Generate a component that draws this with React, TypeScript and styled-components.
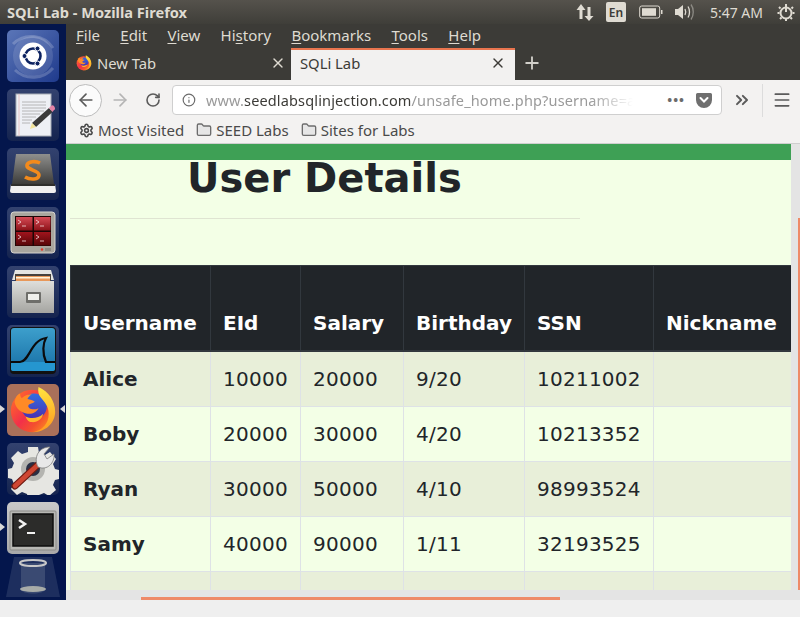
import styled, { createGlobalStyle } from "styled-components";
import type { ReactNode } from "react";
import { ArrowLeft, ArrowRight, ChevronsRight, Folder, Info, Menu, Plus, RotateCw, Settings, X } from "lucide-react";

const GlobalStyle = createGlobalStyle`
  html, body { margin: 0; padding: 0; background: #efefef; }
  * { box-sizing: border-box; }
`;

const UI_FONT = `"Noto Sans", "Open Sans", sans-serif`;
const PAGE_FONT = `"DejaVu Sans", sans-serif`;

const Desktop = styled.div`
  width: 800px;
  height: 617px;
  overflow: hidden;
  display: flex;
  flex-direction: column;
  background: #efefef;
  font-family: ${UI_FONT};
`;
const TitleBar = styled.div`
  height: 24px;
  flex: none;
  display: flex;
  align-items: center;
  padding: 0 5px 0 7px;
  background: linear-gradient(#55524c, #3f3e39);
  color: #dfdbd2;
  font-size: 14.6px;
  font-weight: 700;
`;
const TitleText = styled.span`
  flex: 1;
`;
const Indicators = styled.div`
  display: flex;
  align-items: center;
  color: #dfdbd2;
  font-weight: 400;
`;
const LangBadge = styled.span`
  width: 20px;
  height: 20px;
  margin: 0 13px 0 12px;
  background: #dfdbd2;
  color: #3c3b37;
  border-radius: 2px;
  font-size: 12px;
  font-weight: 600;
  display: flex;
  align-items: center;
  justify-content: center;
`;
const IndicatorGap = styled.span`
  width: 12px;
`;
const Clock = styled.span`
  font-size: 14px;
  margin: 0 14px 0 15px;
`;
const Workspace = styled.div`
  height: 576px;
  flex: none;
  display: flex;
`;
const Launcher = styled.div`
  width: 66px;
  flex: none;
  display: flex;
  flex-direction: column;
  align-items: center;
  padding-top: 6px;
  gap: 7px;
  background: #04164c;
`;
const Tile = styled.div<{ $bg: string }>`
  position: relative;
  width: 52px;
  height: 52px;
  flex: none;
  border-radius: 5px;
  background: ${(p) => p.$bg};
  display: flex;
  align-items: center;
  justify-content: center;
`;
const Pip = styled.i<{ $right?: boolean }>`
  position: absolute;
  top: 21px;
  ${(p) => (p.$right ? "right: -6px;" : "left: -7px;")}
  width: 0;
  height: 0;
  border-top: 4px solid transparent;
  border-bottom: 4px solid transparent;
  ${(p) => (p.$right ? "border-right: 5px solid #d8d8d8;" : "border-left: 5px solid #d8d8d8;")}
`;
const TrashTile = styled.div`
  width: 56px;
  height: 40px;
  margin-top: -4px;
  flex: none;
  display: flex;
  justify-content: center;
`;
const Browser = styled.div`
  flex: 1;
  min-width: 0;
  display: flex;
  flex-direction: column;
`;
const MenuBar = styled.div`
  height: 24px;
  flex: none;
  display: flex;
  gap: 20.300px;
  align-items: center;
  padding: 0 0 3px 10px;
  background: #3c3b37;
  color: #dfdbd2;
  font-size: 15px;
`;
const MenuItem = styled.span`
  u {
    text-underline-offset: 2px;
  }
`;
const TabStrip = styled.div`
  height: 32px;
  flex: none;
  display: flex;
  align-items: stretch;
  background: #3c3b37;
`;
const Tab = styled.div<{ $active?: boolean }>`
  width: ${(p) => (p.$active ? "224px" : "225px")};
  display: flex;
  align-items: center;
  gap: 5px;
  padding: ${(p) => (p.$active ? "0 9px 5px 9px" : "0 5px 5px 10px")};
  font-size: 14.8px;
  color: ${(p) => (p.$active ? "#3c3b37" : "#dfdbd2")};
  background: ${(p) => (p.$active ? "#f2f1f0" : "transparent")};
  border-top: 2px solid ${(p) => (p.$active ? "#e9754f" : "transparent")};
  span {
    flex: 1;
  }
`;
const NewTab = styled.div`
  width: 34px;
  padding-bottom: 2px;
  display: flex;
  align-items: center;
  justify-content: center;
  color: #d2d0ca;
`;
const NavBar = styled.div`
  height: 40px;
  flex: none;
  display: flex;
  align-items: center;
  padding-left: 3px;
  background: #f3f2f1;
  color: #5b5b5b;
`;
const BackButton = styled.div`
  width: 33px;
  height: 33px;
  flex: none;
  border: 1px solid #bcbcbc;
  border-radius: 50%;
  background: #fbfbfb;
  display: flex;
  align-items: center;
  justify-content: center;
`;
const NavIcon = styled.div<{ $width: number; $faded?: boolean }>`
  width: ${(p) => p.$width}px;
  flex: none;
  display: flex;
  align-items: center;
  justify-content: center;
  color: ${(p) => (p.$faded ? "#b5b5b5" : "#5b5b5b")};
`;
const UrlBar = styled.div`
  width: 550px;
  height: 30px;
  flex: none;
  margin-left: 4px;
  display: flex;
  align-items: center;
  padding: 0 9px;
  background: #fff;
  border: 1px solid #cfcfcf;
  border-radius: 4px;
`;
const UrlText = styled.div`
  width: 430px;
  margin-left: 10px;
  overflow: hidden;
  white-space: nowrap;
  font-size: 14.5px;
  letter-spacing: 0.15px;
  color: #9a9a9a;
  mask-image: linear-gradient(to right, #000 90%, transparent 100%);
  b {
    font-weight: 400;
    color: #3c3b37;
  }
`;
const UrlDots = styled.span`
  margin-left: 34px;
  font-size: 13px;
  font-weight: 700;
  letter-spacing: 1px;
  color: #6b6b6b;
`;
const PocketWrap = styled.span`
  margin-left: 11px;
  display: flex;
`;
const NavDivider = styled.div`
  width: 1px;
  height: 33px;
  flex: none;
  background: #dcdcdc;
`;
const BookmarkBar = styled.div`
  height: 24px;
  flex: none;
  display: flex;
  align-items: center;
  gap: 12px;
  padding: 0 0 3px 13px;
  background: #f3f2f1;
  border-bottom: 1px solid #cfcfcf;
  color: #4a4a4a;
  font-size: 15px;
`;
const Bookmark = styled.span`
  display: flex;
  align-items: center;
  gap: 4px;
`;
const ContentRow = styled.div`
  flex: 1;
  min-height: 0;
  display: flex;
`;
const Viewport = styled.div`
  width: 725px;
  flex: none;
  overflow: hidden;
  background: #f3ffe6;
  font-family: ${PAGE_FONT};
  color: #212529;
`;
const GreenBar = styled.div`
  height: 16px;
  background: #3ea055;
`;
const Heading = styled.h1`
  margin: 0 0 0 121px;
  height: 58px;
  font-size: 40px;
  line-height: 36px;
  font-weight: 700;
`;
const Rule = styled.hr`
  width: 510px;
  margin: 0 0 46px 4px;
  border: 0;
  border-top: 1px solid #dfe4d2;
`;
const DetailTable = styled.table`
  width: 721px;
  margin-left: 4px;
  table-layout: fixed;
  border-collapse: collapse;
  font-size: 20px;
  line-height: 30px;
  th,
  td {
    padding: 12px 12px;
    text-align: left;
    border: 1px solid #dee2e6;
  }
  thead th {
    height: 85px;
    vertical-align: bottom;
    padding-bottom: 12px;
    background: #212529;
    color: #fff;
    border-color: #32383e;
    border-bottom-width: 2px;
  }
  tbody tr:nth-child(odd) {
    background: #e8efd9;
  }
  tbody tr {
    height: 55px;
  }
  tbody th {
    font-weight: 700;
  }
  tbody td {
    font-weight: 400;
    letter-spacing: 0.25px;
  }
`;
const VerticalScroll = styled.div`
  flex: 1;
  display: flex;
  justify-content: flex-end;
  padding-top: 74px;
  background: #e4e4e4;
`;
const VerticalThumb = styled.div`
  width: 2px;
  height: 100%;
  background: #ee8a68;
`;
const HorizontalScroll = styled.div`
  height: 10px;
  flex: none;
  padding: 7px 0 0 75px;
  background: #e4e4e4;
`;
const HorizontalThumb = styled.div`
  width: 419px;
  height: 3px;
  background: #ee8a68;
`;

const UbuntuLogo = () => (
  <svg width="52" height="52" viewBox="0 0 52 52">
    <path d="M6 14a26 26 0 0 1 40 4M46 38a26 26 0 0 1-38 2" fill="none" stroke="#fff" strokeOpacity="0.2" strokeWidth="3" />
    <circle cx="26" cy="26" r="20" fill="#fff" opacity="0.12" />
    <circle cx="26" cy="26" r="13.500" fill="#fff" />
    <circle cx="26" cy="26" r="7.500" fill="none" stroke="#0c2260" strokeWidth="2.600" />
    <circle cx="17.500" cy="26" r="2.500" fill="#0c2260" stroke="#fff" />
    <circle cx="30.500" cy="18.500" r="2.500" fill="#0c2260" stroke="#fff" />
    <circle cx="30.500" cy="33.500" r="2.500" fill="#0c2260" stroke="#fff" />
  </svg>
);

const EditorIcon = () => (
  <svg width="52" height="52" viewBox="0 0 52 52">
    <rect x="9" y="5" width="35" height="42" fill="#eef0f5" stroke="#a8adb5" />
    <path d="M15 13h24M15 16h24M15 19h24M15 22h22M15 25h18M15 28h14M15 31h10M15 34h8" stroke="#a6a6a6" strokeWidth="0.800" />
    <path d="M12 5v42" stroke="#e7c4c4" />
    <path d="M25 34L42 19l3.500 4L29 38z" fill="#3a3a3a" />
    <path d="M42 19l2-2c1-1 2-1 3 0l1 2c0 1 0 2-1 2l-1.500 2z" fill="#e483a6" />
    <path d="M25 34l4 4-6 2z" fill="#f1e39a" />
  </svg>
);

const SublimeIcon = () => (
  <svg width="52" height="52" viewBox="0 0 52 52">
    <defs>
      <linearGradient id="subBody" x1="0" y1="0" x2="0" y2="1">
        <stop offset="0" stopColor="#8f8f8d" />
        <stop offset="0.7" stopColor="#555553" />
        <stop offset="1" stopColor="#3c3c3a" />
      </linearGradient>
    </defs>
    <path d="M9 6h34l4 30H5z" fill="url(#subBody)" />
    <path d="M4 36h44l1 7a2 2 0 0 1-2 2H5a2 2 0 0 1-2-2z" fill="#f0f0f0" />
    <path d="M4 36h44v2H4z" fill="#2e2e2c" />
    <path d="M33 15c-4-2-12-2-13 2-1 5 12 5 12 10 0 5-9 5-14 2" fill="none" stroke="#f28a1c" strokeWidth="3.600" />
  </svg>
);

const WorkspacesIcon = () => (
  <svg width="52" height="52" viewBox="0 0 52 52">
    <defs>
      <linearGradient id="paneTop" x1="0" y1="0" x2="0" y2="1">
        <stop offset="0" stopColor="#d64a55" />
        <stop offset="1" stopColor="#8c1218" />
      </linearGradient>
      <linearGradient id="paneBottom" x1="0" y1="0" x2="0" y2="1">
        <stop offset="0" stopColor="#a0141c" />
        <stop offset="1" stopColor="#560608" />
      </linearGradient>
    </defs>
    <rect x="4" y="5" width="44" height="41" rx="3" fill="#a9a69e" stroke="#d6d4cf" />
    <rect x="8" y="9" width="36" height="30" fill="#1c0606" />
    <rect x="9" y="10" width="16.500" height="13.500" fill="url(#paneTop)" />
    <rect x="27" y="10" width="16.500" height="13.500" fill="url(#paneTop)" />
    <rect x="9" y="25" width="16.500" height="13.500" fill="url(#paneBottom)" />
    <rect x="27" y="25" width="16.500" height="13.500" fill="url(#paneBottom)" />
    <path d="M11 13l3 2-3 2M15 19h4M29 13l3 2-3 2M33 19h4M11 28l3 2-3 2M15 34h4M29 28l3 2-3 2M33 34h4" stroke="#f4dcdc" fill="none" strokeWidth="0.800" />
    <circle cx="35" cy="42.500" r="1.300" fill="#e23b2e" />
    <rect x="38" y="41" width="6" height="3" fill="#8d8a83" />
  </svg>
);

const FilesIcon = () => (
  <svg width="52" height="52" viewBox="0 0 52 52">
    <defs>
      <linearGradient id="cabinet" x1="0" y1="0" x2="0" y2="1">
        <stop offset="0" stopColor="#dededb" />
        <stop offset="1" stopColor="#a5a5a1" />
      </linearGradient>
    </defs>
    <path d="M8 4h36l3 10H5z" fill="#e4e4e1" />
    <path d="M8 8h36v8H8z" fill="#46413c" />
    <path d="M9 10h34v5H9z" fill="#e8985a" />
    <path d="M9 11h34v1.500H9z" fill="#fff3d8" />
    <rect x="5" y="15" width="42" height="32" fill="url(#cabinet)" />
    <rect x="19" y="26" width="15" height="11" rx="1" fill="#6e6e6a" />
    <rect x="21" y="28" width="11" height="6" fill="#f0f0ec" />
  </svg>
);

const WiresharkIcon = () => (
  <svg width="52" height="52" viewBox="0 0 52 52">
    <defs>
      <linearGradient id="sharkSea" x1="0" y1="0" x2="0" y2="1">
        <stop offset="0" stopColor="#3d9fcc" />
        <stop offset="1" stopColor="#176fa5" />
      </linearGradient>
    </defs>
    <rect x="3" y="2" width="46" height="47" rx="4" fill="#111" />
    <rect x="4" y="3" width="44" height="43" rx="3" fill="url(#sharkSea)" />
    <rect x="4" y="37" width="44" height="9" rx="2" fill="#2596cf" />
    <path d="M4 37h9c9 0 11-22 26-24-3 5-4 15 0 24h9" fill="none" stroke="#0b0b0b" strokeWidth="2.200" />
  </svg>
);

const FirefoxIcon = ({ size }: { size: number }) => (
  <svg width={size} height={size} viewBox="0 0 52 52">
    <defs>
      <linearGradient id="fxBody" x1="0" y1="0.2" x2="0.9" y2="1">
        <stop offset="0" stopColor="#ff6a2a" />
        <stop offset="0.45" stopColor="#f2304a" />
        <stop offset="0.7" stopColor="#f4502e" />
        <stop offset="1" stopColor="#ff9a1f" />
      </linearGradient>
      <linearGradient id="fxWing" x1="0.3" y1="0" x2="0.4" y2="1">
        <stop offset="0" stopColor="#ffe640" />
        <stop offset="1" stopColor="#ff9a1f" />
      </linearGradient>
      <linearGradient id="fxGlobe" x1="0.5" y1="0" x2="0.5" y2="1">
        <stop offset="0" stopColor="#2f6fe0" />
        <stop offset="1" stopColor="#4b2fb0" />
      </linearGradient>
    </defs>
    <circle cx="25" cy="27" r="23" fill="url(#fxBody)" />
    <circle cx="27" cy="22" r="14" fill="url(#fxGlobe)" />
    <path d="M32 1c11 5 18 15 18 27 0 12-10 22-24 22 10-2 17-9 17-20 0-8-5-13-9-18-2-3-3-7-2-11z" fill="url(#fxWing)" />
    <path d="M6 17c1-5 3-8 6-9 0 3 1 4 2 5 3-3 7-4 11-4-2 1-4 3-5 5 3 1 6 1 8 3-2 2-6 2-7 4-1 3 5 6 11 3-2 4-7 7-12 6-6-1-13-5-14-13z" fill="#ff8a26" />
    <path d="M18 33c6 3 14 2 19-3-1 6-7 10-13 9-3 0-5-3-6-6z" fill="#ffb52a" />
  </svg>
);

const ToolsIcon = () => (
  <svg width="52" height="52" viewBox="0 0 52 52">
    <path d="M21 4h10l1 6 6 2 5-3 6 7-3 5 2 5 4 1v9l-4 1-2 5 3 5-7 6-5-3-5 2-1 3H21l-1-4-5-2-5 3-6-6 3-5-2-5-4-1v-9l4-1 2-5-3-5 7-7 4 3 6-2z" fill="#e6e6e2" />
    <circle cx="26" cy="26" r="12" fill="#b4b4b0" />
    <circle cx="26" cy="26" r="7" fill="#2a2f44" />
    <path d="M8 43l27-25" stroke="#6e1a12" strokeWidth="7" strokeLinecap="round" />
    <path d="M8 43l27-25" stroke="#cf4632" strokeWidth="4.600" strokeLinecap="round" />
    <path d="M31 24C26 14 32 4 43 4l-6 7 3 5 7-5c1 9-7 17-16 13z" fill="#e8e8e8" stroke="#7c7c7c" strokeWidth="0.800" />
  </svg>
);

const TerminalIcon = () => (
  <svg width="52" height="52" viewBox="0 0 52 52">
    <rect x="3" y="9" width="46" height="39" rx="1" fill="#b8b8b4" stroke="#8a8a86" />
    <rect x="6" y="12" width="40" height="32" fill="#2c2c2a" stroke="#0e0e0e" strokeWidth="1.500" />
    <path d="M12 18l6 4-6 4" fill="none" stroke="#f2f2f2" strokeWidth="2.500" />
    <path d="M20 31h8" stroke="#f2f2f2" strokeWidth="2" />
  </svg>
);

const TrashIcon = () => (
  <svg width="56" height="40" viewBox="0 0 56 40">
    <path d="M9 0h38l8 40H1z" fill="#1d2e5e" />
    <path d="M16 6v26c0 6 24 6 24 0V6z" fill="#3a4a72" />
    <ellipse cx="28" cy="6" rx="13" ry="3" fill="none" stroke="#c8c8c8" strokeWidth="2" />
    <ellipse cx="28" cy="32" rx="13" ry="3" fill="#a8aca8" />
  </svg>
);

const NetworkIcon = () => (
  <svg width="18" height="18" viewBox="0 0 17 18" fill="#dfdbd2">
    <path d="M4.500 1L9 7H6v9H3V7H0zM11 4h3v9h3l-4.500 5L8 13h3z" />
  </svg>
);

const BatteryIcon = () => (
  <svg width="24" height="14" viewBox="0 0 24 14">
    <rect x="0.700" y="1" width="20" height="12" rx="2" fill="none" stroke="#dfdbd2" />
    <rect x="3" y="3.200" width="14" height="7.600" fill="#dfdbd2" />
    <path d="M22 5h1.500v4H22z" fill="#dfdbd2" />
  </svg>
);

const VolumeIcon = () => (
  <svg width="20" height="18" viewBox="0 0 20 18">
    <path d="M0 6h3l5-4v14l-5-4H0z" fill="#dfdbd2" />
    <path d="M10 6c1 2 1 4 0 6M13 3.500c2 3 2 8 0 11" fill="none" stroke="#dfdbd2" strokeWidth="1.300" />
    <path d="M16 1.500c3 4 3 11 0 15" fill="none" stroke="#8d8b85" strokeWidth="1.300" />
  </svg>
);

const SessionIcon = () => (
  <svg width="18" height="18" viewBox="0 0 18 18" fill="none" stroke="#dfdbd2">
    <path d="M9 1v8" strokeWidth="2" />
    <circle cx="9" cy="10" r="5.500" strokeWidth="2" />
    <path d="M2 4l1.500 1.500M16 4l-1.500 1.500M0.500 10h2M15.500 10h2M3 16l1.500-1.500M15 16l-1.500-1.500M9 16v2" strokeWidth="2" />
  </svg>
);

const PocketIcon = () => (
  <svg width="16" height="15" viewBox="0 0 16 15">
    <path d="M1.500 0h13A1.500 1.500 0 0 1 16 1.500V7A8 8 0 0 1 0 7V1.500A1.500 1.500 0 0 1 1.500 0z" fill="#6f6f6f" />
    <path d="M4.500 5L8 8.500 11.500 5" fill="none" stroke="#fff" strokeWidth="2" strokeLinecap="round" />
  </svg>
);

const DOCK_TILE = "linear-gradient(#33426f, #15244f)";
const docks: { bg: string; icon: ReactNode; pips?: "left" | "both" }[] = [
  { bg: "linear-gradient(135deg, #5b76b8, #1f3a8c)", icon: <UbuntuLogo /> },
  { bg: DOCK_TILE, icon: <EditorIcon /> },
  { bg: DOCK_TILE, icon: <SublimeIcon /> },
  { bg: DOCK_TILE, icon: <WorkspacesIcon /> },
  { bg: DOCK_TILE, icon: <FilesIcon /> },
  { bg: DOCK_TILE, icon: <WiresharkIcon /> },
  { bg: "#a9705a", icon: <FirefoxIcon size={48} />, pips: "both" },
  { bg: DOCK_TILE, icon: <ToolsIcon /> },
  { bg: "linear-gradient(#c9c9c9, #a9a9a9)", icon: <TerminalIcon />, pips: "left" },
];

const menus: [string, string, string][] = [
  ["", "F", "ile"],
  ["", "E", "dit"],
  ["", "V", "iew"],
  ["Hi", "s", "tory"],
  ["", "B", "ookmarks"],
  ["", "T", "ools"],
  ["", "H", "elp"],
];

const users = [
  { name: "Alice", eid: "10000", salary: "20000", birthday: "9/20", ssn: "10211002" },
  { name: "Boby", eid: "20000", salary: "30000", birthday: "4/20", ssn: "10213352" },
  { name: "Ryan", eid: "30000", salary: "50000", birthday: "4/10", ssn: "98993524" },
  { name: "Samy", eid: "40000", salary: "90000", birthday: "1/11", ssn: "32193525" },
  { name: "", eid: "", salary: "", birthday: "", ssn: "" },
];

const columns = [
  { label: "Username", width: 140 },
  { label: "EId", width: 90 },
  { label: "Salary", width: 103 },
  { label: "Birthday", width: 121 },
  { label: "SSN", width: 129 },
  { label: "Nickname", width: 138 },
];

const App = () => {
  return (
    <Desktop>
      <GlobalStyle />
      <TitleBar>
        <TitleText>SQLi Lab - Mozilla Firefox</TitleText>
        <Indicators>
          <NetworkIcon />
          <LangBadge>En</LangBadge>
          <BatteryIcon />
          <IndicatorGap />
          <VolumeIcon />
          <Clock>5:47 AM</Clock>
          <SessionIcon />
        </Indicators>
      </TitleBar>
      <Workspace>
        <Launcher>
          {docks.map((dock, index) => (
            <Tile key={index} $bg={dock.bg}>
              {dock.icon}
              {dock.pips && <Pip />}
              {dock.pips === "both" && <Pip $right />}
            </Tile>
          ))}
          <TrashTile>
            <TrashIcon />
          </TrashTile>
        </Launcher>
        <Browser>
          <MenuBar>
            {menus.map(([before, key, after]) => (
              <MenuItem key={key}>
                {before}
                <u>{key}</u>
                {after}
              </MenuItem>
            ))}
          </MenuBar>
          <TabStrip>
            <Tab>
              <FirefoxIcon size={16} />
              <span>New Tab</span>
              <X size={16} />
            </Tab>
            <Tab $active>
              <span>SQLi Lab</span>
              <X size={16} />
            </Tab>
            <NewTab>
              <Plus size={20} strokeWidth={2.2} />
            </NewTab>
          </TabStrip>
          <NavBar>
            <BackButton>
              <ArrowLeft size={20} />
            </BackButton>
            <NavIcon $width={35} $faded>
              <ArrowRight size={20} />
            </NavIcon>
            <NavIcon $width={31}>
              <RotateCw size={16} strokeWidth={2.4} />
            </NavIcon>
            <UrlBar>
              <Info size={14} color="#6b6b6b" />
              <UrlText>
                www.<b>seedlabsqlinjection.com</b>/unsafe_home.php?username=alice
              </UrlText>
              <UrlDots>•••</UrlDots>
              <PocketWrap>
                <PocketIcon />
              </PocketWrap>
            </UrlBar>
            <NavIcon $width={40}>
              <ChevronsRight size={20} strokeWidth={2.4} />
            </NavIcon>
            <NavDivider />
            <NavIcon $width={38}>
              <Menu size={20} />
            </NavIcon>
          </NavBar>
          <BookmarkBar>
            <Bookmark>
              <Settings size={15} strokeWidth={2.6} />
              Most Visited
            </Bookmark>
            <Bookmark>
              <Folder size={16} color="#6d6d6d" fill="#e6e6e6" />
              SEED Labs
            </Bookmark>
            <Bookmark>
              <Folder size={16} color="#6d6d6d" fill="#e6e6e6" />
              Sites for Labs
            </Bookmark>
          </BookmarkBar>
          <ContentRow>
            <Viewport>
              <GreenBar />
              <Heading>User Details</Heading>
              <Rule />
              <DetailTable>
                <colgroup>
                  {columns.map((column) => (
                    <col key={column.label} width={column.width} />
                  ))}
                </colgroup>
                <thead>
                  <tr>
                    {columns.map((column) => (
                      <th key={column.label}>{column.label}</th>
                    ))}
                  </tr>
                </thead>
                <tbody>
                  {users.map((user, index) => (
                    <tr key={index}>
                      <th>{user.name}</th>
                      <td>{user.eid}</td>
                      <td>{user.salary}</td>
                      <td>{user.birthday}</td>
                      <td>{user.ssn}</td>
                      <td></td>
                    </tr>
                  ))}
                </tbody>
              </DetailTable>
            </Viewport>
            <VerticalScroll>
              <VerticalThumb />
            </VerticalScroll>
          </ContentRow>
          <HorizontalScroll>
            <HorizontalThumb />
          </HorizontalScroll>
        </Browser>
      </Workspace>
    </Desktop>
  );
};

export default App;
